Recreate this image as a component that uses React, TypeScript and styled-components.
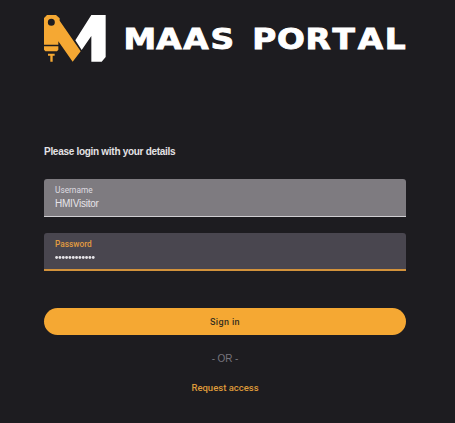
import React from "react";
import styled, { createGlobalStyle } from "styled-components";

const GlobalStyle = createGlobalStyle`
  *, *::before, *::after { box-sizing: border-box; }
  body { margin: 0; background: #1d1c20; }
`;

const Page = styled.main`
  width: 100%;
  min-height: 423px;
  padding: 15px 49px 0 44px;
  display: flex;
  flex-direction: column;
  background: #1d1c20;
  font-family: "Liberation Sans", Arial, sans-serif;
`;

const Brand = styled.header`
  display: flex;
  align-items: flex-start;
  height: 47px;
`;

const Emblem = styled.svg`
  flex: none;
  width: 62px;
  height: 47px;
`;

const Wordmark = styled.svg`
  flex: none;
  width: 300px;
  height: 47px;
  overflow: visible;
  fill: #fff;
  stroke: #fff;
  stroke-width: 0.9px;
  font: bold 28px "DejaVu Sans", sans-serif;
`;

const Form = styled.form`
  display: flex;
  flex-direction: column;
  margin-top: 84px;
`;

const Heading = styled.h1`
  margin: 0;
  font-size: 10px;
  line-height: 12px;
  letter-spacing: -0.29px;
  font-weight: 700;
  color: #e4e2e5;
`;

const Field = styled.label<{ $active?: boolean }>`
  display: flex;
  flex-direction: column;
  height: 38px;
  margin-top: ${(p) => (p.$active ? 16 : 21)}px;
  padding: 5px 11px 0;
  border-radius: 3px 3px 0 0;
  background: ${(p) => (p.$active ? "#49464f" : "#7e7b80")};
  border-bottom: ${(p) => (p.$active ? "2px solid #d2923b" : "1px solid #d0ced2")};
`;

const FieldLabel = styled.span<{ $active?: boolean }>`
  font: ${(p) => (p.$active ? 500 : 400)} 8.3px/12px Roboto, sans-serif;
  color: ${(p) => (p.$active ? "#e29c40" : "#dedce0")};
`;

const Input = styled.input`
  width: 100%;
  height: 15px;
  padding: 0;
  border: 0;
  outline: 0;
  background: transparent;
  color: #e6e4e8;
  font: 10px/15px "Liberation Sans", Arial, sans-serif;
  letter-spacing: -0.22px;
`;

const MaskedValue = styled.svg`
  width: 42px;
  height: 14px;
  fill: #e6e4e8;
`;

const SignIn = styled.button`
  height: 27px;
  margin-top: 37px;
  padding: 1px 0 0;
  border: 0;
  border-radius: 14px;
  background: #f5a833;
  color: #38301f;
  font: 500 9px/26px Roboto, sans-serif;
  letter-spacing: 0.35px;
`;

const Divider = styled.div`
  margin-top: 17px;
  text-align: center;
  font-size: 10px;
  line-height: 13px;
  letter-spacing: -0.12px;
  color: #77747c;
`;

const RequestLink = styled.a`
  align-self: center;
  margin-top: 16px;
  font: 500 9.5px/13px Roboto, sans-serif;
  color: #dd9a3a;
  text-decoration: none;
`;

const STRETCH = 1.17;
const glyphCentres = [33.8, 62.9, 90, 116.3, 132, 158.2, 184.9, 212.2, 237.8, 264.5, 289.3];

export default function App() {
  return (
    <>
      <GlobalStyle />
      <Page>
        <Brand>
          <Emblem viewBox="24 22 186 141" aria-hidden="true">
            <path
              fill="#f5a833"
              fillRule="evenodd"
              d="M24 31 33 22H60L71 32V39L134 131 110 162 67 101V111H24ZM46 33A10.5 10.5 0 1 0 46 54A10.5 10.5 0 1 0 46 33Z"
            />
            <path fill="#f5a833" d="M24 116H67V126L63 131H28L24 126ZM36 138H56V144H50V162H43V144H36Z" />
            <path fill="#fff" d="M166 22H209V148L197 162H166V85L137 127 118 98Z" />
          </Emblem>
          <Wordmark viewBox="0 0 300 47" role="img" aria-label="MAAS PORTAL">
            <text y="34.2" textAnchor="middle" transform={`scale(${STRETCH} 1)`}>
              {"MAAS PORTAL".split("").map((glyph, i) => (
                <tspan key={i} x={glyphCentres[i] / STRETCH}>
                  {glyph}
                </tspan>
              ))}
            </text>
          </Wordmark>
        </Brand>
        <Form>
          <Heading>Please login with your details</Heading>
          <Field>
            <FieldLabel>Username</FieldLabel>
            <Input defaultValue="HMIVisitor" aria-label="Username" />
          </Field>
          <Field $active>
            <FieldLabel $active>Password</FieldLabel>
            <MaskedValue viewBox="0 0 42 14" aria-label="Password entered">
              {Array.from({ length: 12 }, (_, i) => (
                <circle key={i} cx={1.6 + i * 3.33} cy="7.5" r="1.4" />
              ))}
            </MaskedValue>
          </Field>
          <SignIn type="button">Sign in</SignIn>
          <Divider>- OR -</Divider>
          <RequestLink href="#">Request access</RequestLink>
        </Form>
      </Page>
    </>
  );
}
